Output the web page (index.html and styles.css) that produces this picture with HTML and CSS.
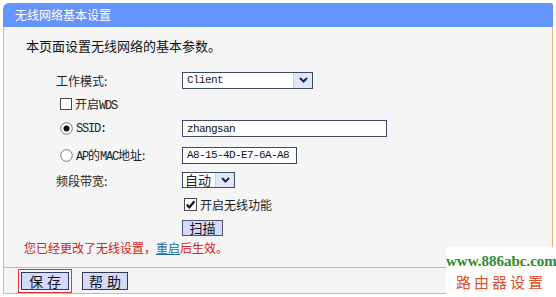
FILE: index.html
```html
<!DOCTYPE html>
<html lang="zh-CN">
<head>
    <meta charset="UTF-8">
    <title>无线网络基本设置</title>
    <link rel="stylesheet" href="styles.css">
</head>
<body>
    <div class="panel">
        <div class="title">无线网络基本设置</div>

        <div class="content">
            <p class="intro">本页面设置无线网络的基本参数。</p>

            <div class="form">
                <div class="label">工作模式:</div>
                <div class="field">
                    <div class="select wide">
                        <span class="value en">Client</span>
                        <span class="arrow"><svg width="9" height="6" viewBox="0 0 9 6"><path d="M1 1 L4.5 4.5 L8 1" fill="none" stroke="#1c2a4a" stroke-width="2"/></svg></span>
                    </div>
                </div>

                <div class="label check-row">
                    <svg class="box" width="12" height="12" viewBox="0 0 12 12"><rect x="0.5" y="0.5" width="11" height="11" fill="#fff" stroke="#4a4a4a"/></svg>
                    <span>开启<span class="en lbl">WDS</span></span>
                </div>
                <div class="field"></div>

                <div class="label check-row">
                    <svg class="radio" width="13" height="13" viewBox="0 0 13 13"><circle cx="6.5" cy="6.5" r="5.8" fill="#fff" stroke="#7a7a7a"/><circle cx="6.5" cy="6.5" r="3" fill="#111"/></svg>
                    <span class="en lbl">SSID:</span>
                </div>
                <div class="field">
                    <input class="text ssid en" type="text" value="zhangsan">
                </div>

                <div class="label check-row">
                    <svg class="radio" width="13" height="13" viewBox="0 0 13 13"><circle cx="6.5" cy="6.5" r="5.8" fill="#fff" stroke="#7a7a7a"/></svg>
                    <span><span class="en lbl">AP</span>的<span class="en lbl">MAC</span>地址:</span>
                </div>
                <div class="field">
                    <input class="text mac en" type="text" value="A8-15-4D-E7-6A-A8">
                </div>

                <div class="label">频段带宽:</div>
                <div class="field">
                    <div class="select narrow">
                        <span class="value zh">自动</span>
                        <span class="arrow"><svg width="9" height="6" viewBox="0 0 9 6"><path d="M1 1 L4.5 4.5 L8 1" fill="none" stroke="#1c2a4a" stroke-width="2"/></svg></span>
                    </div>
                </div>

                <div class="label"></div>
                <div class="field check-row wireless">
                    <svg class="box" width="13" height="13" viewBox="0 0 13 13"><rect x="0.5" y="0.5" width="12" height="12" fill="#fff" stroke="#4a4a4a"/><path d="M2.8 6.6 L5.4 9.4 L10.4 3.2" fill="none" stroke="#111" stroke-width="2.2"/></svg>
                    <span>开启无线功能</span>
                </div>

                <div class="label"></div>
                <div class="field">
                    <button class="scan">扫描</button>
                </div>
            </div>

            <p class="notice">您已经更改了无线设置，<a href="#">重启</a>后生效。</p>
        </div>

        <div class="buttons">
            <button class="btn focused">保存</button>
            <button class="btn">帮助</button>
        </div>
    </div>

    <div class="watermark">
        <div class="site">www.886abc.com</div>
        <div class="slogan">路由器设置</div>
    </div>
</body>
</html>
```

FILE: styles.css
```css
body {
    margin: 0;
    padding: 3px 0 0 3px;
    background-color: #fff;
    font-family: "Noto Sans CJK SC", sans-serif;
    font-size: 12px;
    color: #1e1e1e;
}
.panel {
    width: 550px;
}
.title {
    height: 24px;
    line-height: 24px;
    padding-left: 12px;
    background-color: #6495ff;
    color: #fff;
    border-radius: 6px 2px 0 0;
}
.content {
    background-color: #f5f5f5;
    border-left: 1px solid #e2b57a;
    border-right: 1px solid #e2b57a;
    border-top: 1px solid #f0f5ff;
    padding-bottom: 11px;
}
.intro {
    margin: 0;
    padding: 9px 0 0 22px;
    font-size: 13px;
    line-height: 18px;
    color: #111;
}
.form {
    margin-top: 13px;
    display: grid;
    grid-template-columns: 126px 1fr;
    grid-template-rows: 24px 23px 27px 26px 24px 24px 24px;
    padding-left: 52px;
}
.label, .field {
    display: flex;
    align-items: center;
}
.check-row {
    gap: 3px;
}
.label.check-row {
    padding-left: 4px;
}
.wireless {
    padding-left: 2px;
}
.en {
    font-family: "Liberation Mono", monospace;
    font-size: 11px;
    letter-spacing: -0.6px;
}
.en.lbl {
    font-size: 12px;
    letter-spacing: -1.2px;
}
.select {
    display: flex;
    box-sizing: border-box;
    height: 17px;
    border: 1px solid #3c4a68;
    background-color: #fff;
}
.select.wide {
    width: 131px;
}
.select.narrow {
    width: 53px;
    height: 16px;
}
.select .value {
    flex-grow: 1;
    padding-left: 4px;
    line-height: 15px;
}
.select .value.zh {
    font-size: 13px;
    padding-left: 2px;
    line-height: 14px;
}
.select .arrow {
    width: 18px;
    display: flex;
    align-items: center;
    justify-content: center;
    background-color: #dfe6f6;
    border-left: 1px solid #c6d0e6;
}
.text {
    box-sizing: border-box;
    height: 17px;
    margin: 0;
    padding: 0 4px;
    border: 1px solid #3c4a68;
    background-color: #fff;
    color: #111;
    outline: none;
}
.ssid {
    width: 205px;
}
.mac {
    width: 115px;
}
.scan {
    box-sizing: border-box;
    width: 41px;
    height: 16px;
    margin: 0;
    padding: 0;
    border: 1px solid #4a5470;
    background-color: #d4dafc;
    font-family: "Noto Sans CJK SC", sans-serif;
    font-size: 13px;
    line-height: 14px;
    color: #111;
}
.notice {
    margin: 0;
    padding-left: 20px;
    line-height: 16px;
    color: #d42020;
}
.notice a {
    color: #1f6fa3;
}
.buttons {
    display: flex;
    gap: 13px;
    box-sizing: border-box;
    height: 27px;
    padding: 4px 0 0 17px;
    border: 1px solid #e2b57a;
    background-color: #f5f5f5;
}
.btn {
    box-sizing: border-box;
    width: 48px;
    height: 18px;
    margin: 0;
    padding: 0 0 0 4px;
    border: 1px solid #333a55;
    background-color: #d4dafc;
    font-family: "Noto Sans CJK SC", sans-serif;
    font-size: 14px;
    line-height: 16px;
    letter-spacing: 4px;
    color: #111;
}
.btn + .btn {
    width: 46px;
}
.btn.focused {
    outline: 1px solid #e03030;
    outline-offset: 2px;
}
.watermark {
    position: absolute;
    right: 0;
    top: 247px;
    width: 110px;
    height: 50px;
    background-color: #fff;
    text-align: center;
}
.site {
    margin-top: 6px;
    font-family: "Liberation Serif", serif;
    font-weight: bold;
    font-size: 15px;
    line-height: 17px;
    color: #2f8a2a;
}
.slogan {
    margin-top: 2px;
    font-size: 15px;
    line-height: 20px;
    letter-spacing: 3px;
    color: #e2502e;
}
```
